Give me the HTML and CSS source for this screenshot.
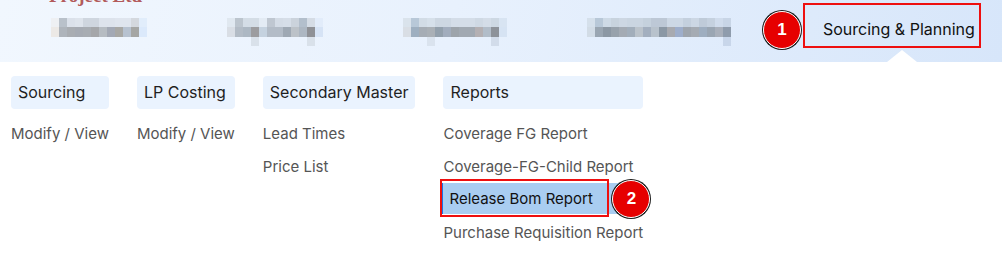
FILE: index.html
```html
<!DOCTYPE html>
<html>
<head>
<meta charset="utf-8">
<link rel="stylesheet" href="styles.css">
</head>
<body>
<header class="topbar">
  <div class="brand">Project Ltd</div>
  <nav class="nav">
    <div class="mosaic m1"><div class="row top"></div><div class="row bottom"></div></div>
    <div class="mosaic m2"><div class="row top"></div><div class="row bottom"></div><div class="row desc"></div></div>
    <div class="mosaic m3"><div class="row top"></div><div class="row bottom"></div><div class="row desc"></div></div>
    <div class="mosaic m4"><div class="row top"></div><div class="row bottom"></div><div class="row desc"></div></div>
    <a class="nav-link active">Sourcing &amp; Planning
      <span class="mark mark-nav"></span>
      <span class="badge badge-nav">1</span>
      <span class="caret"></span>
    </a>
  </nav>
</header>
<section class="dropdown">
  <div class="col">
    <div class="col-head">Sourcing</div>
    <div class="col-item">Modify / View</div>
  </div>
  <div class="col">
    <div class="col-head">LP Costing</div>
    <div class="col-item">Modify / View</div>
  </div>
  <div class="col">
    <div class="col-head">Secondary Master</div>
    <div class="col-item">Lead Times</div>
    <div class="col-item">Price List</div>
  </div>
  <div class="col">
    <div class="col-head">Reports</div>
    <div class="col-item">Coverage FG Report</div>
    <div class="col-item">Coverage-FG-Child Report</div>
    <div class="col-item"><span class="selected">Release Bom Report<span class="mark mark-item"></span><span class="badge badge-item">2</span></span></div>
    <div class="col-item">Purchase Requisition Report</div>
  </div>
</section>
</body>
</html>
```
FILE: styles.css
```css
* { box-sizing: border-box; }
html, body { margin: 0; padding: 0; background: #fff; }
body {
  font-family: Inter, "Noto Sans", "Liberation Sans", sans-serif;
  width: 1002px;
  height: 261px;
  overflow: hidden;
}

.topbar {
  height: 62px;
  background: linear-gradient(100deg, #f1f7fe 0%, #e8f1fd 45%, #d7e6fa 100%);
  overflow: hidden;
  position: relative;
}
.brand {
  font-family: "Liberation Serif", serif;
  font-weight: bold;
  font-size: 19px;
  line-height: 19px;
  height: 19px;
  margin-top: -14px;
  margin-left: 49px;
  color: #a8403f;
  opacity: 0.85;
}
.nav {
  display: flex;
  align-items: flex-start;
  gap: 80px;
  padding-left: 51px;
  padding-top: 13px;
}
.mosaic .row { height: 9px; }
.mosaic .row.bottom { height: 10px; }
.mosaic .row.desc { height: 9px; }
.m1 { width: 96px; }
.m2 { width: 96px; }
.m3 { width: 104px; }
.m4 { width: 144px; }

.m1 .top { background: linear-gradient(to right, #eef0f3 0 8px, #b9c1ca 8px 16px, #dbe1ea 16px 24px, #dee4ec 24px 32px, #cfd6df 32px 48px, #dde3ec 48px 64px, #dfe5ee 64px 80px, #d4d8de 80px 88px, #e1edfb 88px 96px); }
.m1 .bottom { background: linear-gradient(to right, #ece9e6 0 8px, #aeb4bb 8px 16px, #a9adb2 16px 24px, #a6abb3 24px 32px, #a8adb3 32px 40px, #a5a7aa 40px 48px, #b6bcc2 48px 56px, #a3a9b5 56px 64px, #a8a8a5 64px 72px, #b7c2d0 72px 80px, #a5a6a4 80px 88px, #dbe9fb 88px 96px); }

.m2 .top { background: linear-gradient(to right, #e0e8f0 0 8px, #bcc5ce 8px 16px, #d4dde6 16px 32px, #e3ebf4 32px 40px, #bfc7d1 40px 48px, #d4dce6 48px 56px, #d6dee8 56px 64px, #cbd3dc 64px 72px, #b3bfcc 72px 80px, #d5dce5 80px 88px, #e2ecfa 88px 96px); }
.m2 .bottom { background: linear-gradient(to right, #d9dee5 0 8px, #b3bcc6 8px 16px, #adb8c3 16px 24px, #9c9c9f 24px 32px, #c5d2df 32px 40px, #b3bcc7 40px 56px, #9fa9b4 56px 64px, #bcc2c8 64px 72px, #adb7c2 72px 80px, #8f9196 80px 88px, #d6e3f5 88px 96px); }
.m2 .desc { background: linear-gradient(to right, transparent 0 24px, #d9e1ea 24px 32px, transparent 32px 80px, #d9e1ea 80px 88px, transparent 88px); }

.m3 .top { background: linear-gradient(to right, #dae3ec 0 8px, #b8c8d8 8px 16px, #d2dce6 16px 24px, #d6e0ea 24px 32px, #cdd7e2 32px 48px, #d4dde8 48px 72px, #cfd9e4 72px 80px, #d4dde8 80px 88px, #cdd8e3 88px 96px, #d8e4f2 96px 104px); }
.m3 .bottom { background: linear-gradient(to right, #d9dee5 0 8px, #9eafc0 8px 16px, #a6adb5 16px 24px, #aab0b6 24px 32px, #93a0ac 32px 40px, #a2adbd 40px 48px, #9da4ab 48px 56px, #a1a9b2 56px 72px, #b4b0b3 72px 80px, #b2bdc9 80px 88px, #8d9299 88px 96px, #d6e3f3 96px 104px); }
.m3 .desc { background: linear-gradient(to right, transparent 0 24px, #dae3ee 24px 32px, transparent 32px 88px, #d2dcea 88px 96px, transparent 96px); }

.m4 .top { background: linear-gradient(to right, #d5e0eb 0 8px, #b8c8d8 8px 16px, #cedae6 16px 24px, #c8d3de 24px 32px, #cdd7e3 32px 40px, #cad5e1 40px 56px, #c5d1dd 56px 64px, #bdc8d6 64px 80px, #cdd8e5 80px 96px, #c4d0de 96px 104px, #ccd7e4 104px 112px, #bfcbd9 112px 120px, #c5d1df 120px 128px, #d0dcec 128px 136px, #c8d5e6 136px 144px); }
.m4 .bottom { background: linear-gradient(to right, #d2dce6 0 8px, #9aa6b2 8px 16px, #8c98a4 16px 24px, #98a2ac 24px 32px, #a4abb4 32px 40px, #a2aebb 40px 48px, #bbc3cb 48px 56px, #a3afbf 56px 64px, #b8c2cc 64px 72px, #8b98a5 72px 80px, #a8aab0 80px 88px, #9eaecb 88px 96px, #9ea5ae 96px 104px, #a5abb3 104px 112px, #9eaec0 112px 120px, #9aa6b3 120px 128px, #a9b0bb 128px 136px, #8f9cac 136px 144px); }
.m4 .desc { background: linear-gradient(to right, transparent 0 136px, #c8d6ea 136px 144px); }

.nav-link {
  position: relative;
  margin-left: 12px;
  margin-top: 1px;
  font-size: 16px;
  line-height: 20px;
  color: #111;
  white-space: nowrap;
}

.mark {
  position: absolute;
  border: 2px solid #ee0f0f;
  pointer-events: none;
}
.mark-nav { left: -20px; top: -16px; right: -6px; height: 45px; }
.badge {
  position: absolute;
  width: 38px;
  height: 38px;
  border-radius: 50%;
  background: #e60000;
  border: 1.5px solid #fff;
  box-shadow: 0 0 0 1px #1a1a1a;
  color: #fff;
  font-family: "Liberation Sans", Arial, sans-serif;
  font-weight: bold;
  font-size: 17px;
  line-height: 35px;
  text-align: center;
}
.badge-nav { left: -60px; top: -8px; }
.caret {
  position: absolute;
  left: 64px;
  top: 31px;
  width: 0;
  height: 0;
  border-left: 15px solid transparent;
  border-right: 15px solid transparent;
  border-bottom: 12px solid #fff;
}

.dropdown {
  display: flex;
  align-items: flex-start;
  gap: 28px;
  padding: 14px 11px 0;
}
.col { display: flex; flex-direction: column; }
.col-head {
  height: 33px;
  line-height: 33px;
  padding: 0 7px;
  background: #eaf3fe;
  border-radius: 4px;
  font-size: 16px;
  color: #1f1f1f;
  margin-bottom: 8px;
  white-space: nowrap;
}
.col-item {
  height: 33px;
  line-height: 33px;
  font-size: 15px;
  color: #555;
  white-space: nowrap;
}
.selected {
  position: relative;
  display: inline-block;
  width: 178px;
  height: 31px;
  line-height: 31px;
  margin-left: -2px;
  padding: 0 0 0 6px;
  background: #a9cdf1;
  border-left: 2px solid #1a73e8;
  color: #111;
  vertical-align: top;
}
.mark-item { left: -3px; top: -4px; width: 169px; height: 38px; }
.badge-item { left: 169px; top: -3px; }
```
